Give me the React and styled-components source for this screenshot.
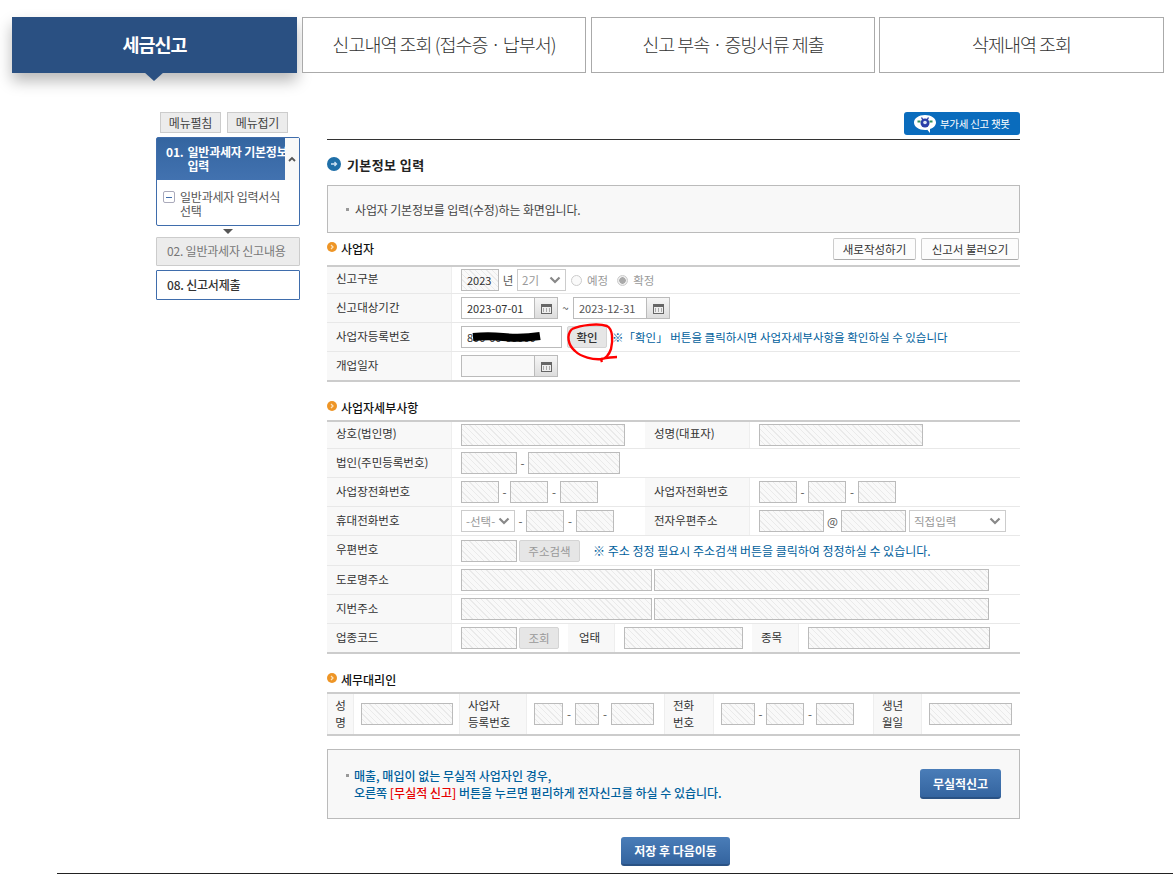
import styled, { createGlobalStyle } from 'styled-components';

const GlobalStyle = createGlobalStyle`
  html, body { margin: 0; padding: 0; background: #fff; }
  body {
    font-family: "Noto Sans CJK KR", "Noto Sans", sans-serif;
    font-size: 12px;
    color: #333;
    overflow: hidden;
  }
  * { box-sizing: border-box; }
`;

const hatch = `repeating-linear-gradient(45deg, #f9f9f9 0, #f9f9f9 3px, #eaeaea 3px, #eaeaea 4px)`;

const Page = styled.div`
  width: 1173px;
  height: 874px;
  padding-top: 17px;
`;
const Tabs = styled.div`
  display: flex;
  gap: 5px;
  padding-left: 12px;
`;
const Tab = styled.div`
  position: relative;
  width: ${p => p.$w}px;
  height: 56px;
  margin-left: ${p => p.$ml || 0}px;
  padding-bottom: 3px;
  display: flex;
  align-items: center;
  justify-content: center;
  font-size: 18.5px;
  letter-spacing: -1px;
  font-weight: ${p => (p.$active ? 700 : 300)};
  color: ${p => (p.$active ? '#fff' : '#333')};
  background: ${p => (p.$active ? '#2a5082' : '#fff')};
  border: 1px solid ${p => (p.$active ? '#2a5082' : '#aaa')};
  box-shadow: ${p => (p.$active ? '0 8px 14px rgba(0,0,0,.28)' : 'none')};
  &::after {
    content: ${p => (p.$active ? '""' : 'none')};
    position: absolute;
    left: 131px;
    bottom: -9px;
    border-left: 10px solid transparent;
    border-right: 10px solid transparent;
    border-top: 9px solid #2a5082;
  }
`;
const Body = styled.div`
  display: flex;
  gap: 27px;
  margin-top: 39px;
  padding-left: 156px;
`;
const Side = styled.div`
  width: 144px;
  display: flex;
  flex-direction: column;
`;
const SideButtons = styled.div`
  display: flex;
  gap: 6px;
  padding-left: 4px;
  height: 25px;
`;
const SideButton = styled.div`
  width: 61px;
  height: 21px;
  display: flex;
  align-items: center;
  justify-content: center;
  background: #ececec;
  border: 1px solid #ccc;
  font-size: 12px;
  letter-spacing: -.2px;
  color: #444;
`;
const StepPanel = styled.div`
  height: 89px;
  border: 1px solid #3f6dac;
  border-radius: 2px;
`;
const StepHead = styled.div`
  display: flex;
  height: 42px;
`;
const StepTitle = styled.div`
  flex: 1;
  display: flex;
  gap: 4px;
  padding: 7px 0 0 9px;
  white-space: nowrap;
  overflow: hidden;
  color: #fff;
  font-weight: 700;
  line-height: 14px;
  letter-spacing: -.2px;
  background: linear-gradient(#3465a0, #4272b0);
`;
const ScrollBox = styled.div`
  width: 14px;
  background: #f8f8f8;
  display: flex;
  align-items: center;
  justify-content: center;
`;
const StepItem = styled.div`
  display: flex;
  gap: 5px;
  padding: 10px 6px 0 6px;
  line-height: 14px;
  font-size: 12px;
  letter-spacing: -.2px;
  color: #555;
`;
const MinusBox = styled.span`
  flex: none;
  width: 12px;
  height: 12px;
  margin-top: 1px;
  border: 1px solid #aab;
  border-radius: 2px;
  display: flex;
  align-items: center;
  justify-content: center;
  &::before {
    content: "";
    width: 6px;
    height: 1px;
    background: #3f6dac;
  }
`;
const StepArrow = styled.div`
  height: 11px;
  display: flex;
  justify-content: center;
  align-items: center;
  &::before {
    content: "";
    border-left: 5px solid transparent;
    border-right: 5px solid transparent;
    border-top: 5px solid #555;
  }
`;
const StepBox = styled.div`
  height: ${p => p.$h}px;
  margin-bottom: ${p => p.$mb || 0}px;
  padding: 0 0 2px 10px;
  display: flex;
  align-items: center;
  gap: 4px;
  border: 1px solid ${p => (p.$on ? '#3f6dac' : '#ccc')};
  border-radius: 1px;
  background: ${p => (p.$on ? '#fff' : '#ececec')};
  color: ${p => (p.$on ? '#333' : '#777')};
  font-weight: ${p => (p.$on ? 500 : 400)};
  letter-spacing: -.2px;
`;
const Main = styled.div`
  width: 693px;
  display: flex;
  flex-direction: column;
`;
const TopBar = styled.div`
  height: 28px;
  border-bottom: 1px solid #333;
  display: flex;
  justify-content: flex-end;
  align-items: flex-start;
`;
const ChatButton = styled.div`
  width: 116px;
  height: 23px;
  border-radius: 3px;
  background: #0a6cbd;
  color: #fff;
  font-size: 10.5px;
  letter-spacing: -.3px;
  display: flex;
  align-items: center;
  gap: 4px;
  padding-left: 10px;
`;
const PageTitle = styled.h2`
  margin: 14px 0 2px;
  height: 20px;
  display: flex;
  align-items: center;
  gap: 6px;
  font-size: 13px;
  letter-spacing: .4px;
  font-weight: 700;
  color: #222;
`;
const InfoBox = styled.div`
  margin-top: 9px;
  height: 48px;
  display: flex;
  align-items: center;
  padding-left: 18px;
  gap: 6px;
  background: #f8f8f8;
  border: 1px solid #bbb;
  font-size: 12px;
  letter-spacing: -.15px;
  color: #444;
`;
const Square = styled.span`
  width: 3px;
  height: 3px;
  background: #999;
`;
const SectionHead = styled.div`
  height: ${p => p.$h}px;
  display: flex;
  justify-content: space-between;
  align-items: flex-end;
  padding-bottom: ${p => p.$pb}px;
`;
const SectionTitle = styled.h3`
  margin: 0 0 ${p => p.$mb || 0}px;
  display: flex;
  align-items: center;
  gap: 4px;
  font-size: 12px;
  font-weight: 500;
  color: #111;
  line-height: 18px;
`;
const HeadButtons = styled.div`
  display: flex;
  gap: 5px;
  padding-right: 1px;
`;
const WhiteButton = styled.div`
  width: ${p => p.$w}px;
  height: 22px;
  display: flex;
  align-items: center;
  justify-content: center;
  background: #fcfcfc;
  border: 1px solid #ccc;
  border-bottom-color: #aaa;
  border-radius: 2px;
  font-size: 11.5px;
  color: #333;
`;
const Table = styled.div`
  border-top: 2px solid #ccc;
  border-bottom: 2px solid #ccc;
`;
const Label = styled.div`
  flex: none;
  width: ${p => p.$w || 125}px;
  margin-left: ${p => p.$ml || 0}px;
  background: #f8f8f8;
  border-right: 1px solid #eee;
  border-left: ${p => (p.$ml ? '1px solid #eee' : 'none')};
  display: flex;
  align-items: center;
  padding-left: ${p => p.$pl ?? 9}px;
  padding-bottom: 3px;
  color: #333;
  font-size: 11.5px;
`;
const Row = styled.div`
  display: flex;
  height: ${p => p.$h || 29}px;
  border-bottom: 1px solid #e8e8e8;
  &:first-child { height: 27px; }
  &:first-child ${Label} { padding-bottom: 4px; }
  &:last-child { border-bottom: none; height: 28px; }
`;
const Cell = styled.div`
  flex: ${p => (p.$w ? 'none' : 1)};
  width: ${p => (p.$w ? `${p.$w}px` : 'auto')};
  display: flex;
  align-items: center;
  padding-left: ${p => p.$pl ?? 9}px;
`;
const Field = styled.input`
  flex: none;
  width: ${p => p.$w}px;
  height: 22px;
  margin-left: ${p => p.$ml || 0}px;
  padding: 0 ${p => p.$pad ?? 5}px;
  border: 1px solid #bbb;
  background: ${p => (p.$hatched ? hatch : p.$soft ? '#f9f9f9' : '#fff')};
  font: inherit;
  font-size: 11px;
  color: ${p => (p.$dim ? '#555' : '#333')};
  outline: none;
`;
const FakeSelect = styled.div`
  flex: none;
  width: ${p => p.$w}px;
  height: 22px;
  margin-left: ${p => p.$ml || 0}px;
  padding: 0 4px;
  border: 1px solid #ccc;
  background: #fff;
  color: #999;
  font-size: 11.5px;
  display: flex;
  align-items: center;
  justify-content: space-between;
`;
const CalButton = styled.div`
  flex: none;
  width: 23px;
  height: 22px;
  background: linear-gradient(#f6f6f6, #ddd);
  border: 1px solid #bbb;
  border-left: none;
  display: flex;
  align-items: center;
  justify-content: center;
`;
const Sep = styled.span`
  flex: none;
  width: ${p => p.$w}px;
  text-align: center;
  color: #555;
  font-size: 11.5px;
`;
const Radio = styled.span`
  flex: none;
  width: 11px;
  height: 11px;
  margin: 0 5px 0 ${p => p.$ml}px;
  border-radius: 50%;
  border: 1px solid #ccc;
  background: ${p => (p.$on ? 'radial-gradient(circle, #aaa 0 3px, #eee 3.5px)' : '#fafafa')};
`;
const MutedText = styled.span`
  color: #999;
  font-size: 11.5px;
`;
const Note = styled.span`
  color: #00609c;
  font-size: ${p => p.$size}px;
  margin-left: ${p => p.$ml}px;
  white-space: nowrap;
`;
const GrayButton = styled.div`
  flex: none;
  position: relative;
  width: ${p => p.$w}px;
  height: 22px;
  margin-left: ${p => p.$ml || 2}px;
  display: flex;
  align-items: center;
  justify-content: center;
  background: #e6e6e6;
  border: 1px solid #d4d4d4;
  border-radius: 2px;
  font-size: 11.5px;
  color: ${p => (p.$dim ? '#999' : '#333')};
  font-weight: ${p => (p.$dim ? 400 : 500)};
`;
const Scribble = styled.svg`
  position: absolute;
  left: ${p => p.$l}px;
  top: ${p => p.$t}px;
  pointer-events: none;
`;
const NumberWrap = styled.div`
  position: relative;
  flex: none;
  display: flex;
`;
const AgentTable = styled(Table)`
  height: 44px;
  display: flex;
`;
const AgentLabel = styled.div`
  flex: none;
  width: ${p => p.$w}px;
  margin-left: ${p => p.$ml || 0}px;
  background: #f8f8f8;
  border-left: 1px solid #eee;
  border-right: 1px solid #eee;
  display: flex;
  align-items: center;
  justify-content: ${p => (p.$center ? 'center' : 'flex-start')};
  text-align: ${p => (p.$center ? 'center' : 'left')};
  padding-left: ${p => (p.$center ? 0 : 8)}px;
  font-size: 11.5px;
  line-height: 17px;
`;
const AgentCell = styled.div`
  flex: none;
  display: flex;
  align-items: center;
  margin-left: 7px;
`;
const NoticeBox = styled.div`
  margin-top: 13px;
  height: 70px;
  display: flex;
  justify-content: space-between;
  align-items: center;
  padding: 0 18px;
  background: #f8f8f8;
  border: 1px solid #bbb;
`;
const NoticeText = styled.div`
  font-size: 12px;
  line-height: 17px;
  font-weight: 500;
  color: #00609c;
  padding-left: 8px;
  position: relative;
  &::before {
    content: "";
    position: absolute;
    left: 0;
    top: 7px;
    width: 3px;
    height: 3px;
    background: #999;
  }
`;
const Red = styled.span`
  color: #e60000;
`;
const BlueButton = styled.div`
  flex: none;
  width: ${p => p.$w}px;
  height: ${p => p.$h}px;
  display: flex;
  align-items: center;
  justify-content: center;
  border-radius: 3px;
  background: linear-gradient(#4a7db8, #34649f);
  border-bottom: 2px solid #2a5284;
  color: #fff;
  font-size: 12px;
  font-weight: 700;
`;
const SaveRow = styled.div`
  margin-top: 18px;
  padding-left: 4px;
  display: flex;
  justify-content: center;
`;
const BottomLine = styled.div`
  margin: 7px 0 0 57px;
  height: 1px;
  background: #222;
`;

function Chevron({ color = '#888' }) {
  return (
    <svg width="12" height="8" viewBox="0 0 12 8">
      <path d="M1.5 1.5 6 6l4.5-4.5" fill="none" stroke={color} strokeWidth="2.2" />
    </svg>
  );
}

function CalIcon() {
  return (
    <CalButton>
      <svg width="11" height="11" viewBox="0 0 11 11">
        <rect x=".5" y="1.5" width="10" height="9" fill="#eee" stroke="#666" />
        <rect x="0" y="1" width="11" height="3" fill="#666" />
        <path d="M2 6h1M5 6h1M8 6h1M2 8h1M5 8h1M8 8h1" stroke="#666" />
      </svg>
    </CalButton>
  );
}

function ChatIcon() {
  return (
    <svg width="22" height="18" viewBox="0 0 22 18">
      <path d="M11 0C4.800 0 0 3.200 0 7.500S4.800 15 11 15c.8 0 1.600 0 2.300-.2L16 18v-4c3.600-1.200 6-3.600 6-6.500C22 3.200 17.200 0 11 0z" fill="#fff" />
      <path d="M7.500 2.500 9 5M14.500 2.500 13 5" stroke="#2b3fa8" strokeWidth="1.400" />
      <circle cx="11" cy="8" r="4.500" fill="#2b3fa8" />
      <circle cx="11" cy="7.500" r="1.800" fill="#dfe6f5" />
      <path d="M3.500 6.500h3M15.500 6.500h3" stroke="#2f8f5a" strokeWidth="2" />
    </svg>
  );
}

function BlueDot() {
  return (
    <svg width="14" height="14" viewBox="0 0 14 14">
      <circle cx="7" cy="7" r="7" fill="#1f6fa8" />
      <path d="M4 7h5.500M7.500 5l2 2-2 2" fill="none" stroke="#cfe4f3" strokeWidth="1.300" />
    </svg>
  );
}

function OrangeDot() {
  return (
    <svg width="10" height="14" viewBox="0 0 10 14">
      <circle cx="5" cy="5" r="5" fill="#ee9526" />
      <path d="M4 3l2 2-2 2" fill="none" stroke="#fde3bd" strokeWidth="1.300" />
    </svg>
  );
}

export default function App() {
  return (
    <Page>
      <GlobalStyle />
      <Tabs>
        <Tab $active $w={285}>세금신고</Tab>
        <Tab $w={284}>신고내역 조회 (접수증 · 납부서)</Tab>
        <Tab $w={284}>신고 부속 · 증빙서류 제출</Tab>
        <Tab $w={285} $ml={-1}>삭제내역 조회</Tab>
      </Tabs>

      <Body>
        <Side>
          <SideButtons>
            <SideButton>메뉴펼침</SideButton>
            <SideButton>메뉴접기</SideButton>
          </SideButtons>
          <StepPanel>
            <StepHead>
              <StepTitle>
                <span>01.</span>
                <span>일반과세자 기본정보<br />입력</span>
              </StepTitle>
              <ScrollBox>
                <svg width="8" height="6" viewBox="0 0 8 6">
                  <path d="M1 5l3-3 3 3" fill="none" stroke="#555" strokeWidth="1.800" />
                </svg>
              </ScrollBox>
            </StepHead>
            <StepItem>
              <MinusBox />
              <span>일반과세자 입력서식<br />선택</span>
            </StepItem>
          </StepPanel>
          <StepArrow />
          <StepBox $h={29} $mb={4}>02. 일반과세자 신고내용</StepBox>
          <StepBox $h={30} $on>08. 신고서제출</StepBox>
        </Side>

        <Main>
          <TopBar>
            <ChatButton>
              <ChatIcon />
              부가세 신고 챗봇
            </ChatButton>
          </TopBar>
          <PageTitle>
            <BlueDot />
            기본정보 입력
          </PageTitle>
          <InfoBox>
            <Square />
            사업자 기본정보를 입력(수정)하는 화면입니다.
          </InfoBox>

          <SectionHead $h={32} $pb={5}>
            <SectionTitle $mb={2}><OrangeDot />사업자</SectionTitle>
            <HeadButtons>
              <WhiteButton $w={83}>새로작성하기</WhiteButton>
              <WhiteButton $w={98}>신고서 불러오기</WhiteButton>
            </HeadButtons>
          </SectionHead>
          <Table>
            <Row>
              <Label>신고구분</Label>
              <Cell>
                <Field $w={38} $pad={5} $hatched readOnly value="2023" />
                <Sep $w={18}>년</Sep>
                <FakeSelect $w={49}>2기<Chevron /></FakeSelect>
                <Radio $ml={5} />
                <MutedText>예정</MutedText>
                <Radio $ml={9} $on />
                <MutedText>확정</MutedText>
              </Cell>
            </Row>
            <Row>
              <Label>신고대상기간</Label>
              <Cell>
                <Field $w={74} readOnly value="2023-07-01" />
                <CalIcon />
                <Sep $w={15}>~</Sep>
                <Field $w={74} $dim readOnly value="2023-12-31" />
                <CalIcon />
              </Cell>
            </Row>
            <Row>
              <Label>사업자등록번호</Label>
              <Cell>
                <NumberWrap>
                  <Field $w={101} readOnly value="800-00-00000" />
                  <Scribble $l={11} $t={6} width="70" height="10" viewBox="0 0 70 10">
                    <path d="M1 5c10-1 20-1 30 0s24 1 37-1" fill="none" stroke="#000" strokeWidth="8" />
                  </Scribble>
                </NumberWrap>
                <GrayButton $w={40} $ml={5}>
                  확인
                  <Scribble $l={-5} $t={-6} width="60" height="46" viewBox="0 0 60 46">
                    <path
                      d="M9 8C18 4 35 2 44 5c6 3 6 15 4 23-2 6-6 10-9 10-9 1-21-2-27-8C5 24 3 14 9 8M38 38c5-1 12-2 16-2M38 38l1 3"
                      fill="none"
                      stroke="#f00"
                      strokeWidth="2.400"
                    />
                  </Scribble>
                </GrayButton>
                <Note $ml={5} $size={11.5}>※「확인」 버튼을 클릭하시면 사업자세부사항을 확인하실 수 있습니다</Note>
              </Cell>
            </Row>
            <Row>
              <Label>개업일자</Label>
              <Cell>
                <Field $w={74} $soft readOnly />
                <CalIcon />
              </Cell>
            </Row>
          </Table>

          <SectionHead $h={38} $pb={3}>
            <SectionTitle><OrangeDot />사업자세부사항</SectionTitle>
          </SectionHead>
          <Table>
            <Row>
              <Label>상호(법인명)</Label>
              <Cell $w={193}><Field $w={164} $hatched readOnly /></Cell>
              <Label $w={105} $pl={9}>성명(대표자)</Label>
              <Cell><Field $w={164} $hatched readOnly /></Cell>
            </Row>
            <Row>
              <Label>법인(주민등록번호)</Label>
              <Cell>
                <Field $w={56} $hatched readOnly />
                <Sep $w={11}>-</Sep>
                <Field $w={92} $hatched readOnly />
              </Cell>
            </Row>
            <Row>
              <Label>사업장전화번호</Label>
              <Cell $w={193}>
                <Field $w={38} $hatched readOnly />
                <Sep $w={11}>-</Sep>
                <Field $w={38} $hatched readOnly />
                <Sep $w={12}>-</Sep>
                <Field $w={38} $hatched readOnly />
              </Cell>
              <Label $w={105} $pl={9}>사업자전화번호</Label>
              <Cell>
                <Field $w={38} $hatched readOnly />
                <Sep $w={11}>-</Sep>
                <Field $w={38} $hatched readOnly />
                <Sep $w={12}>-</Sep>
                <Field $w={38} $hatched readOnly />
              </Cell>
            </Row>
            <Row>
              <Label>휴대전화번호</Label>
              <Cell $w={193}>
                <FakeSelect $w={54}>-선택-<Chevron /></FakeSelect>
                <Sep $w={11}>-</Sep>
                <Field $w={38} $hatched readOnly />
                <Sep $w={12}>-</Sep>
                <Field $w={38} $hatched readOnly />
              </Cell>
              <Label $w={105} $pl={9}>전자우편주소</Label>
              <Cell>
                <Field $w={65} $hatched readOnly />
                <Sep $w={17}>@</Sep>
                <Field $w={65} $hatched readOnly />
                <FakeSelect $w={97} $ml={3}>직접입력<Chevron /></FakeSelect>
              </Cell>
            </Row>
            <Row $h={30}>
              <Label>우편번호</Label>
              <Cell>
                <Field $w={56} $hatched readOnly />
                <GrayButton $w={61} $dim>주소검색</GrayButton>
                <Note $ml={13} $size={12}>※ 주소 정정 필요시 주소검색 버튼을 클릭하여 정정하실 수 있습니다.</Note>
              </Cell>
            </Row>
            <Row>
              <Label>도로명주소</Label>
              <Cell>
                <Field $w={191} $hatched readOnly />
                <Field $w={335} $ml={2} $hatched readOnly />
              </Cell>
            </Row>
            <Row>
              <Label>지번주소</Label>
              <Cell>
                <Field $w={191} $hatched readOnly />
                <Field $w={335} $ml={2} $hatched readOnly />
              </Cell>
            </Row>
            <Row>
              <Label>업종코드</Label>
              <Cell $w={116}>
                <Field $w={56} $hatched readOnly />
                <GrayButton $w={40} $dim>조회</GrayButton>
              </Cell>
              <Label $w={47} $pl={11}>업태</Label>
              <Cell $w={137}><Field $w={119} $hatched readOnly /></Cell>
              <Label $w={47} $pl={9}>종목</Label>
              <Cell><Field $w={182} $hatched readOnly /></Cell>
            </Row>
          </Table>

          <SectionHead $h={38} $pb={3}>
            <SectionTitle><OrangeDot />세무대리인</SectionTitle>
          </SectionHead>
          <AgentTable>
            <AgentLabel $w={27} $center>성<br />명</AgentLabel>
            <AgentCell><Field $w={92} $hatched readOnly /></AgentCell>
            <AgentLabel $w={68} $ml={6}>사업자<br />등록번호</AgentLabel>
            <AgentCell>
              <Field $w={29} $hatched readOnly />
              <Sep $w={12}>-</Sep>
              <Field $w={24} $hatched readOnly />
              <Sep $w={12}>-</Sep>
              <Field $w={43} $hatched readOnly />
            </AgentCell>
            <AgentLabel $w={50} $ml={10}>전화<br />번호</AgentLabel>
            <AgentCell>
              <Field $w={34} $hatched readOnly />
              <Sep $w={11}>-</Sep>
              <Field $w={38} $hatched readOnly />
              <Sep $w={12}>-</Sep>
              <Field $w={38} $hatched readOnly />
            </AgentCell>
            <AgentLabel $w={49} $ml={19}>생년<br />월일</AgentLabel>
            <AgentCell><Field $w={83} $hatched readOnly /></AgentCell>
          </AgentTable>

          <NoticeBox>
            <NoticeText>
              매출, 매입이 없는 무실적 사업자인 경우,<br />
              오른쪽 <Red>[무실적 신고]</Red> 버튼을 누르면 편리하게 전자신고를 하실 수 있습니다.
            </NoticeText>
            <BlueButton $w={81} $h={30}>무실적신고</BlueButton>
          </NoticeBox>
          <SaveRow>
            <BlueButton $w={109} $h={29}>저장 후 다음이동</BlueButton>
          </SaveRow>
        </Main>
      </Body>
      <BottomLine />
    </Page>
  );
}
